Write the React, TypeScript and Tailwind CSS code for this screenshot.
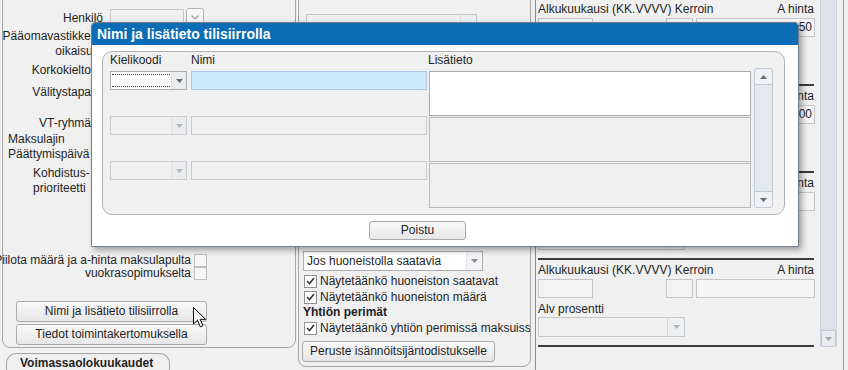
import React from "react";

function Tri({ c = "#6d6d6d", up = false }: { c?: string; up?: boolean }) {
  return (
    <svg width="7" height="4" viewBox="0 0 7 4" className="block">
      <path d={up ? "M0 4h7L3.5 0z" : "M0 0h7L3.5 4z"} fill={c} />
    </svg>
  );
}

function Check() {
  return (
    <span className="flex h-[13px] w-[13px] shrink-0 items-center justify-center border border-[#8e8f8f] bg-white">
      <svg width="9" height="8" viewBox="0 0 9 8">
        <path d="M1 4l2.5 2.5L8 1" fill="none" stroke="#333" strokeWidth="1.6" />
      </svg>
    </span>
  );
}

function Box() {
  return <span className="block h-[13px] w-[13px] shrink-0 border border-[#bdbdbd] bg-[#f6f6f6]" />;
}

function Btn({ children, cls }: { children: React.ReactNode; cls: string }) {
  return (
    <div
      className={
        "flex items-center justify-center rounded-[3px] border border-[#a9a9a9] bg-gradient-to-b from-[#f8f8f8] to-[#e6e6e6] leading-[15px] text-[#1f1f1f] " +
        cls
      }
    >
      {children}
    </div>
  );
}

function Section({ v }: { v?: string }) {
  return (
    <div className="h-[87px]">
      <div className="h-[2px] w-[276px] bg-[#3a3a3a]" />
      <div className="mt-[2px] flex h-[16px] w-[276px] items-center justify-between whitespace-nowrap leading-[16px]">
        <span>Alkukuukausi (KK.VVVV) Kerroin</span>
        <span>A hinta</span>
      </div>
      <div className="mt-[1px] flex h-[19px]">
        <div className="h-[19px] w-[55px] border border-[#c6c6c6] bg-[#f3f3f3]" />
        <div className="ml-[73px] h-[19px] w-[27px] border border-[#c6c6c6] bg-[#f3f3f3]" />
        <div className="ml-[3px] h-[19px] w-[119px] border border-[#c6c6c6] bg-[#f5f5f5] pr-[2px] text-right leading-[17px]">
          {v}
        </div>
      </div>
      <div className="mt-[3px] h-[16px] leading-[16px]">Alv prosentti</div>
      <div className="flex h-[20px] w-[147px] border border-[#c6c6c6] bg-[#f0f0f0]">
        <div className="flex-1" />
        <div className="flex w-[17px] items-center justify-center border-l border-[#d6d6d6] bg-[#eceff3]">
          <Tri c="#b5b5b5" />
        </div>
      </div>
    </div>
  );
}

function DSelect({ focused }: { focused?: boolean }) {
  return (
    <div
      className={
        "flex h-[19px] w-[77px] shrink-0 border " +
        (focused ? "border-[#abadb3] bg-white" : "border-[#cacaca] bg-[#f0f0f0]")
      }
    >
      <div className="flex-1 px-[1px] py-[2px]">
        {focused ? <div className="h-[13px] border-y border-dotted border-[#333]" /> : null}
      </div>
      <div className="flex w-[15px] items-center justify-center border-l border-[#dfe3e8] bg-[#e9edf2]">
        <Tri c={focused ? "#6a6a6a" : "#b8b8b8"} />
      </div>
    </div>
  );
}

export default function App() {
  return (
    <div className="relative h-[370px] w-[848px] overflow-hidden bg-[#f0f0f0] font-['Liberation_Sans',Arial,sans-serif] text-[12px] leading-[15px] text-[#1f1f1f]">
      <div className="flex h-full">
        {/* LEFT COLUMN */}
        <div className="w-[297px] shrink-0">
          <div className="-mt-[10px] ml-[2px] h-[358px] w-[294px] rounded-b-[8px] border border-[#a5a5a5] pt-[17px]">
            <div className="flex h-[20px] items-center">
              <div className="w-[100px] text-right">Henkilö</div>
              <div className="ml-[7px] h-[19px] w-[74px] border border-[#c6c6c6] bg-[#f0f0f0]" />
              <div className="ml-[2px] flex h-[19px] w-[18px] items-center justify-center self-start rounded-[3px] border border-[#b4b4b4] bg-[#f7f7f7]">
                <svg width="8" height="5" viewBox="0 0 8 5">
                  <path d="M0.5 0.5L4 4L7.5 0.5" fill="none" stroke="#a0a0a0" strokeWidth="1.2" />
                </svg>
              </div>
            </div>
            <div className="mt-[1px] w-[101px]">
              <div className="flex justify-end whitespace-nowrap">
                <span className="shrink-0">Pääomavastikkeen</span>
              </div>
              <div className="flex justify-end whitespace-nowrap">
                <span className="shrink-0">oikaisutili</span>
              </div>
            </div>
            <div className="mt-[3px] h-[16px] w-[88px] text-right leading-[16px]">Korkokielto</div>
            <div className="mt-[6px] h-[16px] w-[88px] text-right leading-[16px]">Välitystapa</div>
            <div className="mt-[16px] h-[15px] w-[88px] text-right">VT-ryhmä</div>
            <div className="mt-[1px] pl-[5px]">
              <div>Maksulajin</div>
              <div>Päättymispäivä</div>
            </div>
            <div className="mt-[4px] pl-[30px]">
              <div>Kohdistus-</div>
              <div>prioriteetti</div>
            </div>
            <div className="mt-[58px] flex h-[13px] items-center">
              <div className="flex w-[188px] justify-end whitespace-nowrap leading-[13px]">
                <span className="shrink-0">Piilota määrä ja a-hinta maksulapulta</span>
              </div>
              <div className="ml-[3px]">
                <Box />
              </div>
            </div>
            <div className="flex h-[13px] items-center">
              <div className="flex w-[188px] justify-end whitespace-nowrap leading-[13px]">
                <span className="shrink-0">vuokrasopimukselta</span>
              </div>
              <div className="ml-[3px]">
                <Box />
              </div>
            </div>
            <Btn cls="mt-[21px] ml-[13px] h-[21px] w-[191px]">Nimi ja lisätieto tilisiirrolla</Btn>
            <Btn cls="mt-[2px] ml-[13px] h-[21px] w-[191px]">Tiedot toimintakertomuksella</Btn>
          </div>
          <div className="ml-[6px] mt-[5px] h-[30px] w-[164px] rounded-t-[10px] border border-b-0 border-[#a5a5a5] pl-[13px] pt-[2px] font-bold">
            Voimassaolokuukaudet
          </div>
        </div>

        {/* MIDDLE COLUMN */}
        <div className="w-[238px] shrink-0">
          <div className="-mt-[10px] ml-[1px] h-[377px] w-[233px] overflow-hidden rounded-b-[8px] border border-[#a5a5a5] pt-[23px]">
            <div className="ml-[7px] flex h-[20px] w-[171px] border border-[#c6c6c6] bg-[#f0f0f0]">
              <div className="flex-1" />
              <div className="flex w-[16px] items-center justify-center border-l border-[#dcdcdc] bg-[#eceff3]">
                <Tri c="#b5b5b5" />
              </div>
            </div>
            <div className="ml-[4px] mt-[202px] h-[15px] whitespace-nowrap font-bold">Huoneiston maksut</div>
            <div className="ml-[4px] flex h-[20px] w-[180px] border border-[#abadb3] bg-white">
              <div className="flex-1 pl-[3px] leading-[18px]">Jos huoneistolla saatavia</div>
              <div className="flex w-[16px] items-center justify-center border-l border-[#e3e3e3] bg-[#f1f3f6]">
                <Tri c="#8a8a8a" />
              </div>
            </div>
            <div className="ml-[5px] mt-[2px] flex h-[16px] items-center gap-[3px] whitespace-nowrap">
              <Check />
              <span>Näytetäänkö huoneiston saatavat</span>
            </div>
            <div className="ml-[5px] flex h-[16px] items-center gap-[3px] whitespace-nowrap">
              <Check />
              <span>Näytetäänkö huoneiston määrä</span>
            </div>
            <div className="ml-[4px] h-[15px] whitespace-nowrap font-bold">Yhtiön perimät</div>
            <div className="ml-[5px] flex h-[16px] items-center gap-[3px] whitespace-nowrap">
              <Check />
              <span>Näytetäänkö yhtiön perimissä maksuissa</span>
            </div>
            <Btn cls="mt-[5px] ml-[3px] h-[21px] w-[193px]">Peruste isännöitsijäntodistukselle</Btn>
          </div>
        </div>

        {/* RIGHT COLUMN */}
        <div className="flex h-full w-[313px] shrink-0 border-l border-[#8f8f8f]">
          <div className="w-[284px] overflow-hidden pl-[2px]">
            <div className="-mt-[3px]">
              <Section v="12,50" />
              <Section v="1,00" />
              <Section />
              <Section />
              <div className="h-[2px] w-[276px] bg-[#3a3a3a]" />
            </div>
          </div>
          <div className="flex h-[347px] w-[17px] flex-col justify-end border-x border-[#cfd5dc] bg-[#dde2e8]">
            <div className="flex h-[17px] items-center justify-center rounded-b-[3px] border border-[#bfc6ce] bg-[#e9edf1]">
              <Tri c="#a5a5a5" />
            </div>
          </div>
          <div className="w-[6px]" />
          <div className="w-[1px] bg-[#9a9a9a]" />
        </div>
      </div>

      {/* DIALOG */}
      <div className="absolute left-[91px] top-[22px] flex h-[225px] w-[708px] flex-col overflow-hidden rounded-t-[4px] border border-[#6f7f8f] bg-white shadow-[3px_3px_6px_rgba(0,0,0,0.35)]">
        <div className="flex h-[22px] shrink-0 items-center bg-[#0c6cb5] pl-[5px] text-[14px] font-bold text-white">
          Nimi ja lisätieto tilisiirrolla
        </div>
        <div className="flex-1 pl-[10px] pt-[6px]">
          <div className="h-[164px] w-[683px] rounded-[10px] border border-[#b2b2b2] bg-[#f0f0f0]">
            <div className="mt-[1px] flex h-[15px] items-center pl-[7px]">
              <div className="w-[81px]">Kielikoodi</div>
              <div className="w-[237px]">Nimi</div>
              <div>Lisätieto</div>
            </div>
            <div className="flex pl-[7px]">
              <div className="mt-[3px] w-[319px]">
                {[0, 1, 2].map((i) => (
                  <div key={i} className="flex h-[45px] items-start">
                    <DSelect focused={i === 0} />
                    <div
                      className={
                        "ml-[4px] h-[19px] w-[236px] border " +
                        (i === 0 ? "border-[#aac6e0] bg-[#cce8fd]" : "border-[#c9c9c9] bg-[#f0f0f0]")
                      }
                    />
                  </div>
                ))}
              </div>
              <div className="mt-[3px] flex w-[322px] flex-col gap-[1px]">
                <div className="h-[45px] border border-[#a9a9a9] bg-white" />
                <div className="h-[45px] border border-[#b9b9b9] bg-[#f0f0f0]" />
                <div className="h-[45px] border border-[#b9b9b9] bg-[#f0f0f0]" />
              </div>
              <div className="ml-[3px] flex h-[140px] w-[19px] flex-col justify-between rounded-[3px] border border-[#c3cad2] bg-[#e4e9ef]">
                <div className="flex h-[16px] items-center justify-center rounded-t-[3px] border-b border-[#c3cad2] bg-[#eef1f5]">
                  <Tri c="#6b6b6b" up />
                </div>
                <div className="flex h-[16px] items-center justify-center rounded-b-[3px] border-t border-[#c3cad2] bg-[#eef1f5]">
                  <Tri c="#6b6b6b" />
                </div>
              </div>
            </div>
          </div>
          <Btn cls="mt-[6px] ml-[267px] h-[19px] w-[97px]">Poistu</Btn>
        </div>
      </div>

      {/* CURSOR */}
      <svg className="absolute left-[193px] top-[307px]" width="14" height="22" viewBox="0 0 14 22">
        <path
          d="M0.5 0.5L0.5 17L4.5 13.2L7.3 19.8L9.9 18.7L7.2 12.3L12.6 12.3Z"
          fill="white"
          stroke="black"
          strokeWidth="1"
          strokeLinejoin="round"
        />
      </svg>
    </div>
  );
}
